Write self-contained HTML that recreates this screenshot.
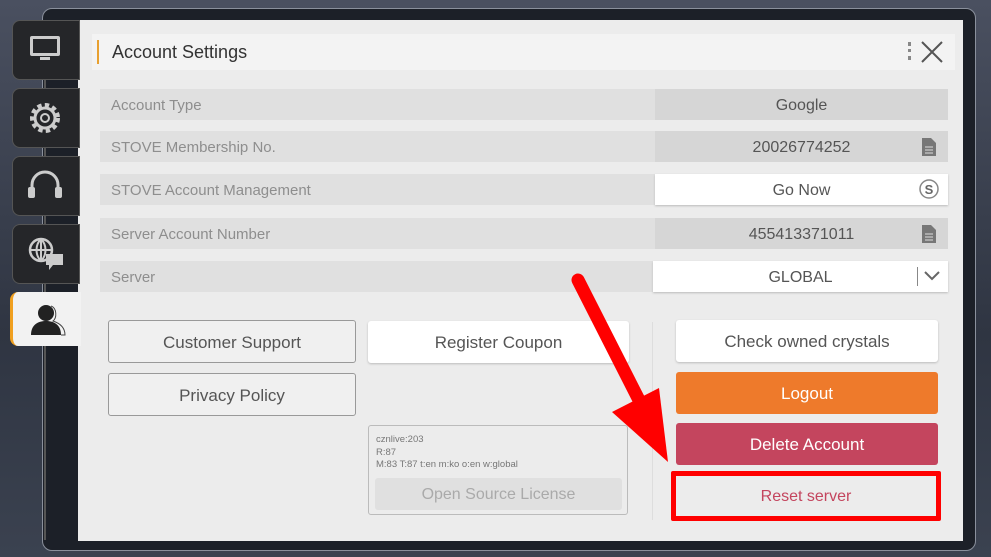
<!DOCTYPE html>
<html><head><meta charset="utf-8"><style>
body{margin:0;width:991px;height:557px;overflow:hidden;background:linear-gradient(180deg,#4a5060,#2f3542 60%,#3b4250);font-family:"Liberation Sans",sans-serif;position:relative}
.abs{position:absolute}
.frame{left:42px;top:8px;width:932px;height:541px;border:1.5px solid #8a909c;border-radius:10px;background:#1c2028}
.panel{left:78px;top:20px;width:885px;height:521px;background:#ececec}
.tab{left:12px;width:66px;height:58px;background:#252629;border:1px solid #555;border-radius:8px 0 0 8px}
.hdr{left:92px;top:34px;width:863px;height:36px;background:#f3f3f3}
.row{left:100px;width:848px;height:31px;background:#e0e0e0;color:#8e8e8e;font-size:15px;line-height:33px}
.row span{padding-left:11px}
.val{position:absolute;left:555px;top:0;width:293px;height:31px;background:#d6d6d6;color:#555;text-align:center;font-size:16px}
.val.w{background:#fff;box-shadow:0 1px 2px #bbb}
.btn{text-align:center;font-size:17px;color:#555;box-sizing:border-box;border-radius:3px}
</style></head><body>
<div class="abs frame"></div>
<div class="abs panel"></div>
<div class="abs" style="left:44px;top:60px;width:2px;height:480px;background:#555"></div>
<div class="abs tab" style="top:20px"><svg width="66" height="58"><rect x="17" y="15" width="30" height="20" rx="2" fill="#ccc"/><rect x="20" y="18" width="24" height="14" fill="#252629"/><rect x="27" y="36" width="10" height="3" fill="#ccc"/></svg></div>
<div class="abs tab" style="top:88px"><svg width="66" height="58"><circle cx="32" cy="29" r="12" fill="none" stroke="#ccc" stroke-width="6" stroke-dasharray="4 3"/><circle cx="32" cy="29" r="10" fill="none" stroke="#ccc" stroke-width="3"/><circle cx="32" cy="29" r="4" fill="none" stroke="#ccc" stroke-width="2"/></svg></div>
<div class="abs tab" style="top:156px"><svg width="66" height="58"><path d="M19 34 V28 A13 13 0 0 1 45 28 V34" fill="none" stroke="#ccc" stroke-width="3"/><rect x="15" y="30" width="7" height="11" rx="2" fill="#ccc"/><rect x="42" y="30" width="7" height="11" rx="2" fill="#ccc"/></svg></div>
<div class="abs tab" style="top:224px"><svg width="66" height="58"><circle cx="28" cy="25" r="11" fill="none" stroke="#ccc" stroke-width="2.5"/><path d="M17 25H39M28 14V36M28 14C22 20 22 30 28 36M28 14C34 20 34 30 28 36" fill="none" stroke="#ccc" stroke-width="2"/><rect x="33" y="29" width="17" height="11" fill="#ccc"/><path d="M36 40 L36 45 L40 40Z" fill="#ccc"/></svg></div>
<div class="abs" style="left:10px;top:292px;width:68px;height:54px;background:#f2f2f2;border-left:3px solid #f0a020;border-radius:8px 0 0 8px"><svg width="66" height="54"><circle cx="33" cy="21" r="8" fill="#222"/><path d="M18 43 C18 32 26 29 33 29 C40 29 48 32 48 43Z" fill="#222"/><path d="M38 14 C44 16 44 26 40 29 C46 31 52 35 52 43 H48" fill="none" stroke="#444" stroke-width="1"/></svg></div>
<div class="abs hdr"></div>
<div class="abs" style="left:97px;top:40px;width:2px;height:24px;background:#e8a030"></div>
<div class="abs" style="left:112px;top:42px;font-size:18px;color:#333">Account Settings</div>
<div class="abs" style="left:908px;top:42px;width:3px;height:18px;border-left:3px dotted #888"></div>
<svg class="abs" style="left:920px;top:40px" width="24" height="24"><path d="M2 2L22 22M22 2L2 22" stroke="#555" stroke-width="2"/></svg>
<div class="abs row" style="top:89px"><span>Account Type</span><div class="val">Google</div></div>
<div class="abs row" style="top:131px"><span>STOVE Membership No.</span><div class="val">20026774252<svg style="position:absolute;right:12px;top:7px" width="14" height="18"><path d="M0 0H9L14 5V18H0Z" fill="#777"/><path d="M3 9H11M3 12H11M3 15H11" stroke="#ddd"/></svg></div></div>
<div class="abs row" style="top:174px"><span>STOVE Account Management</span><div class="val w">Go Now<svg style="position:absolute;right:9px;top:5px" width="20" height="20"><circle cx="10" cy="10" r="9" fill="#fff" stroke="#888" stroke-width="1.5"/><text x="10" y="15" text-anchor="middle" font-size="13" font-weight="bold" fill="#666" font-family="Liberation Sans">S</text></svg></div></div>
<div class="abs row" style="top:218px"><span>Server Account Number</span><div class="val">455413371011<svg style="position:absolute;right:12px;top:7px" width="14" height="18"><path d="M0 0H9L14 5V18H0Z" fill="#777"/><path d="M3 9H11M3 12H11M3 15H11" stroke="#ddd"/></svg></div></div>
<div class="abs row" style="top:261px"><span>Server</span><div class="val w" style="left:553px;width:295px">GLOBAL<div style="position:absolute;right:30px;top:6px;width:1px;height:19px;background:#888"></div><svg style="position:absolute;right:8px;top:9px" width="16" height="12"><path d="M1 2L8 9L15 2" fill="none" stroke="#666" stroke-width="2"/></svg></div></div>
<div class="abs btn" style="left:108px;top:320px;width:248px;height:43px;border:1px solid #999;background:#f0f0f0;line-height:43px">Customer Support</div>
<div class="abs btn" style="left:108px;top:373px;width:248px;height:43px;border:1px solid #999;background:#f0f0f0;line-height:43px">Privacy Policy</div>
<div class="abs btn" style="left:368px;top:321px;width:261px;height:42px;background:#fff;line-height:43px;box-shadow:0 1px 2px #bbb">Register Coupon</div>
<div class="abs" style="left:368px;top:425px;width:260px;height:90px;border:1px solid #bbb;border-radius:3px;box-sizing:border-box;font-size:9.5px;color:#777;padding:8px 7px;line-height:12.5px">cznlive:203<br>R:87<br>M:83 T:87 t:en m:ko o:en w:global</div>
<div class="abs btn" style="left:375px;top:478px;width:247px;height:32px;background:#e0e0e0;line-height:33px;color:#aaa;font-size:16px">Open Source License</div>
<div class="abs" style="left:652px;top:322px;width:1px;height:198px;background:#ddd"></div>
<div class="abs btn" style="left:676px;top:320px;width:262px;height:42px;background:#fff;line-height:43px;box-shadow:0 1px 2px #bbb">Check owned crystals</div>
<div class="abs btn" style="left:676px;top:372px;width:262px;height:42px;background:#ee7a2b;line-height:43px;color:#fff;font-size:17px">Logout</div>
<div class="abs btn" style="left:676px;top:423px;width:262px;height:42px;background:#c4455e;line-height:43px;color:#fff;font-size:17px">Delete Account</div>
<div class="abs btn" style="left:671px;top:471px;width:270px;height:50px;border:5px solid #f00;background:#ececec;line-height:42px;color:#c4455e;font-size:16px;border-radius:2px">Reset server</div>
<svg class="abs" style="left:0;top:0" width="991" height="557"><path d="M578 280 L640 402" stroke="#f00" stroke-width="13" stroke-linecap="round"/><path d="M612 412 L659 388 L668 462Z" fill="#f00"/></svg>
</body></html>
